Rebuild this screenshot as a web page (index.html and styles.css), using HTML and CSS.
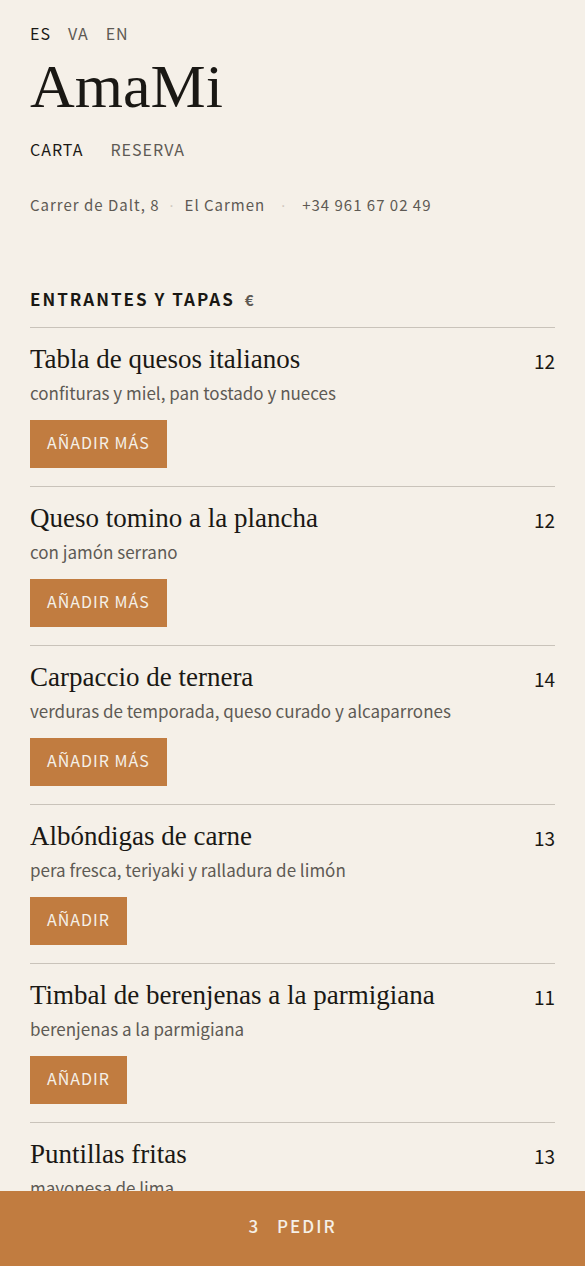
FILE: index.html
```html
<!DOCTYPE html>
<html lang="es">
<head>
<meta charset="UTF-8">
<meta name="viewport" content="width=device-width, initial-scale=1.0">
<title>AmaMi</title>
<link rel="stylesheet" href="styles.css">
</head>
<body>

<div class="page">

    <!-- Cabecera -->
    <header class="header">
        <nav class="langs">
            <a href="#" class="active">ES</a>
            <a href="#">VA</a>
            <a href="#">EN</a>
        </nav>
        <h1 class="logo">AmaMi</h1>
        <nav class="nav">
            <a href="#carta" class="active">CARTA</a>
            <a href="#reserva">RESERVA</a>
        </nav>
        <address class="info">
            <span>Carrer de Dalt, 8</span>
            <span class="dot">·</span>
            <span>El Carmen</span>
            <span class="dot wide">·</span>
            <a href="tel:+34961670249">+34 961 67 02 49</a>
        </address>
    </header>

    <!-- Carta -->
    <main id="carta">
        <h2 class="section-title">ENTRANTES Y TAPAS <span class="currency">€</span></h2>
        <ul class="dishes">
            <li class="dish">
                <div class="dish-text">
                    <h3>Tabla de quesos italianos</h3>
                    <p>confituras y miel, pan tostado y nueces</p>
                    <button type="button" class="add">AÑADIR MÁS</button>
                </div>
                <span class="price">12</span>
            </li>
            <li class="dish">
                <div class="dish-text">
                    <h3>Queso tomino a la plancha</h3>
                    <p>con jamón serrano</p>
                    <button type="button" class="add">AÑADIR MÁS</button>
                </div>
                <span class="price">12</span>
            </li>
            <li class="dish">
                <div class="dish-text">
                    <h3>Carpaccio de ternera</h3>
                    <p>verduras de temporada, queso curado y alcaparrones</p>
                    <button type="button" class="add">AÑADIR MÁS</button>
                </div>
                <span class="price">14</span>
            </li>
            <li class="dish">
                <div class="dish-text">
                    <h3>Albóndigas de carne</h3>
                    <p>pera fresca, teriyaki y ralladura de limón</p>
                    <button type="button" class="add">AÑADIR</button>
                </div>
                <span class="price">13</span>
            </li>
            <li class="dish">
                <div class="dish-text">
                    <h3>Timbal de berenjenas a la parmigiana</h3>
                    <p>berenjenas a la parmigiana</p>
                    <button type="button" class="add">AÑADIR</button>
                </div>
                <span class="price">11</span>
            </li>
            <li class="dish">
                <div class="dish-text">
                    <h3>Puntillas fritas</h3>
                    <p>mayonesa de lima</p>
                    <button type="button" class="add">AÑADIR</button>
                </div>
                <span class="price">13</span>
            </li>
        </ul>
    </main>
</div>

<!-- Barra del pedido -->
<button type="button" class="order-bar"><span>3</span><span>PEDIR</span></button>

</body>
</html>
```
FILE: styles.css
```css
* {
    box-sizing: border-box;
}
body {
    display: flex;
    flex-direction: column;
    height: 100vh;
    margin: 0;
    background-color: #f5f0e8;
    color: #1a1814;
    font-family: "Noto Sans CJK SC", "Open Sans", sans-serif;
    font-size: 16px;
}
h1, h2, h3, p, ul {
    margin: 0;
    padding: 0;
}
a {
    color: inherit;
    text-decoration: none;
}
.page {
    flex: 1;
    min-height: 0;
    padding: 21px 30px 0;
    overflow-y: auto;
    scrollbar-width: none;
}

/* Cabecera */
.langs, .nav {
    display: flex;
    line-height: 24px;
    letter-spacing: 1px;
    color: #5e5a54;
}
.langs {
    gap: 17px;
}
.nav {
    gap: 27px;
    margin-top: 10px;
}
.active {
    color: #1a1814;
}
.logo {
    font-family: "Liberation Serif", serif;
    font-size: 62px;
    font-weight: 400;
    line-height: 82px;
}
.info {
    display: flex;
    gap: 10px;
    margin-top: 32px;
    font-size: 15px;
    line-height: 24px;
    font-style: normal;
    letter-spacing: 1px;
    color: #5e5a54;
}
.dot {
    color: #cfc8be;
    font-family: "Open Sans", sans-serif;
}
.wide {
    padding: 0 6px;
}

/* Carta */
.section-title {
    display: flex;
    align-items: baseline;
    gap: 10px;
    margin-top: 68px;
    padding-bottom: 13px;
    font-size: 17px;
    line-height: 28px;
    letter-spacing: 2px;
}
.currency {
    font-size: 15px;
    color: #5e5a54;
}
.dishes {
    list-style: none;
}
.dish {
    display: flex;
    justify-content: space-between;
    padding: 13px 0 18px;
    border-top: 1px solid #c9c3ba;
}
.dish h3 {
    font-family: "Liberation Serif", serif;
    font-size: 27px;
    font-weight: 400;
    line-height: 36px;
}
.dish p {
    font-size: 17px;
    line-height: 32px;
    color: #5e5a54;
}
.price {
    font-size: 19px;
    line-height: 40px;
}
.add {
    display: block;
    height: 48px;
    margin-top: 11px;
    padding: 0 17px 4px;
    border: none;
    background-color: #c17c40;
    color: #f5f0e8;
    font-family: inherit;
    font-size: 16px;
    letter-spacing: 1px;
    cursor: pointer;
}

/* Barra del pedido */
.order-bar {
    display: flex;
    flex-shrink: 0;
    align-items: center;
    justify-content: center;
    gap: 17px;
    height: 75px;
    padding: 0 0 6px;
    border: none;
    background-color: #c17c40;
    color: #f5f0e8;
    font-family: inherit;
    font-size: 17px;
    font-weight: 500;
    letter-spacing: 2px;
    cursor: pointer;
}
```
